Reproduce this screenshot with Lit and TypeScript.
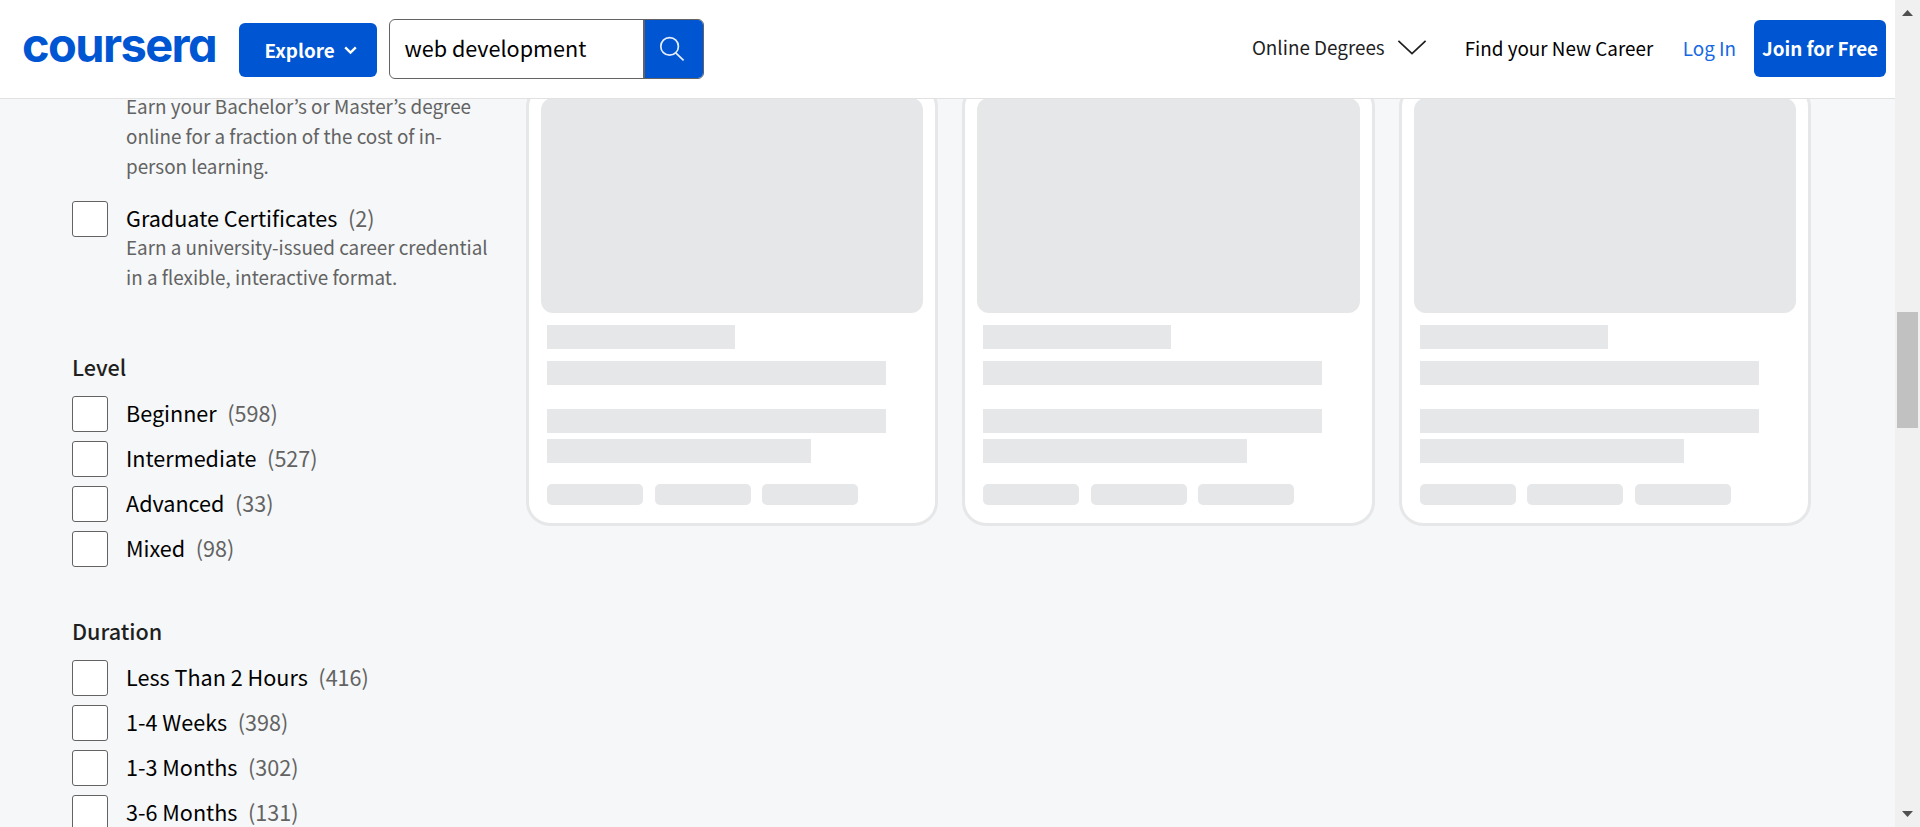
import { LitElement, html, css, svg } from 'lit';
import { customElement, property } from 'lit/decorators.js';

interface Option {
  label: string;
  count: number;
  note?: unknown;
}

const LEVELS: Option[] = [
  { label: 'Beginner', count: 598 },
  { label: 'Intermediate', count: 527 },
  { label: 'Advanced', count: 33 },
  { label: 'Mixed', count: 98 },
];

const DURATIONS: Option[] = [
  { label: 'Less Than 2 Hours', count: 416 },
  { label: '1-4 Weeks', count: 398 },
  { label: '1-3 Months', count: 302 },
  { label: '3-6 Months', count: 131 },
];

@customElement('site-header')
class SiteHeader extends LitElement {
  static styles = css`
    :host {
      display: flex;
      align-items: flex-start;
      box-sizing: border-box;
      height: 99px;
      padding: 0 9px 0 22px;
      background: #fff;
      border-bottom: 1px solid #e1e1e1;
      font-size: 18.85px;
      line-height: 30px;
      white-space: nowrap;
    }
    .logo {
      width: 217px;
      margin-top: 17px;
      font: 700 47px/56px Inter, sans-serif;
      font-feature-settings: 'cv11';
      letter-spacing: -1.6px;
      color: #0056d2;
    }
    .explore {
      display: flex;
      align-items: center;
      box-sizing: border-box;
      width: 138px;
      height: 54px;
      margin-top: 23px;
      padding-left: 25.5px;
      border-radius: 6px;
      background: #0056d2;
      color: #fff;
      font-weight: 700;
    }
    .explore svg {
      margin-left: 9px;
    }
    .search {
      display: flex;
      box-sizing: border-box;
      width: 315px;
      height: 60px;
      margin: 19px 0 0 12px;
      border: 1px solid #636363;
      border-radius: 6px;
      overflow: hidden;
      font-size: 21.6px;
      color: #000;
    }
    .query {
      flex: 1;
      padding: 13px 0 0 14.5px;
    }
    .go {
      width: 58px;
      border-left: 2px solid #636363;
      background: #0056d2;
    }
    .go svg {
      display: block;
      margin: 16px 0 0 14px;
    }
    .nav {
      display: flex;
      margin-left: auto;
    }
    .degrees {
      padding-top: 32px;
      color: #1f1f1f;
    }
    .degrees svg {
      margin-left: 12px;
    }
    .career {
      margin-left: 38px;
      padding-top: 33px;
      color: #000;
    }
    .login {
      margin-left: 29.5px;
      padding-top: 33px;
      color: #1668e3;
    }
    .join {
      box-sizing: border-box;
      width: 132px;
      height: 57px;
      margin: 20px 0 0 18px;
      padding-top: 13px;
      border-radius: 6px;
      background: #0056d2;
      color: #fff;
      font-weight: 700;
      text-align: center;
    }
  `;

  render() {
    return html`
      <div class="logo">coursera</div>
      <div class="explore">
        <span>Explore</span>
        <svg width="13" height="9" viewBox="0 0 13 9" fill="none" stroke="#fff" stroke-width="2.4">
          <path d="M1.2 1.4 6.5 6.6 11.8 1.4" />
        </svg>
      </div>
      <div class="search">
        <div class="query">web development</div>
        <div class="go">
          <svg width="26" height="27" viewBox="0 0 26 27" fill="none" stroke="#e6eefa" stroke-width="1.7">
            <circle cx="10.6" cy="10.4" r="8.8" />
            <path d="M16.7 16.8 24.6 24.4" />
          </svg>
        </div>
      </div>
      <div class="nav">
        <div class="degrees">
          Online Degrees<svg width="30" height="15" viewBox="0 0 30 15" fill="none" stroke="#1f1f1f" stroke-width="1.7">
            <path d="M1.4.8 15 13.6 28.6.8" />
          </svg>
        </div>
        <div class="career">Find your New Career</div>
        <div class="login">Log In</div>
        <div class="join">Join for Free</div>
      </div>
    `;
  }
}

@customElement('filter-option')
class FilterOption extends LitElement {
  @property({ attribute: false }) option!: Option;

  static styles = css`
    :host {
      display: grid;
      grid-template-columns: 36px 1fr;
      column-gap: 18px;
      font-size: 21.6px;
      line-height: 30px;
    }
    .box {
      box-sizing: border-box;
      height: 36px;
      background: #fff;
      border: 1px solid #636363;
      border-radius: 3px;
    }
    .text {
      padding-top: 2px;
      color: #000;
    }
    .count {
      margin-left: 10.5px;
      color: #636363;
    }
    .note {
      margin-top: -1px;
      font-size: 18.85px;
      color: #636363;
    }
  `;

  render() {
    const { label, count, note } = this.option;
    return html`
      <div class="box"></div>
      <div class="text">
        <span>${label}</span><span class="count">(${count})</span>
        ${note ? html`<div class="note">${note}</div>` : ''}
      </div>
    `;
  }
}

@customElement('skeleton-card')
class SkeletonCard extends LitElement {
  static styles = css`
    :host {
      display: block;
      box-sizing: border-box;
      height: 443px;
      padding: 12px;
      background: #fff;
      border: 3px solid #e5e7e8;
      border-radius: 24px;
    }
    .image,
    .bar,
    .pill {
      background: #e5e7e8;
    }
    .image {
      height: 215px;
      border-radius: 12px;
    }
    .lines {
      padding: 12px 6px 0;
    }
    .bar {
      height: 24px;
    }
    .partner {
      width: 188px;
    }
    .title {
      width: 339px;
      margin-top: 12px;
    }
    .skills {
      width: 339px;
      margin-top: 24px;
    }
    .rest {
      width: 264px;
      margin-top: 6px;
    }
    .pills {
      display: flex;
      gap: 11.5px;
      margin-top: 20.5px;
    }
    .pill {
      width: 96px;
      height: 21.5px;
      border-radius: 5px;
    }
  `;

  render() {
    return html`
      <div class="image"></div>
      <div class="lines">
        <div class="bar partner"></div>
        <div class="bar title"></div>
        <div class="bar skills"></div>
        <div class="bar rest"></div>
        <div class="pills">
          <div class="pill"></div>
          <div class="pill"></div>
          <div class="pill"></div>
        </div>
      </div>
    `;
  }
}

@customElement('app-root')
class AppRoot extends LitElement {
  static styles = css`
    :host {
      display: grid;
      grid-template-columns: 1fr 25px;
      height: 827px;
      overflow: hidden;
      background: #f5f7f8;
      font-family: 'Noto Sans CJK KR', 'Noto Sans', sans-serif;
    }
    .page {
      display: flex;
      flex-direction: column;
      height: 827px;
      overflow: hidden;
    }
    .content {
      flex: 1;
      min-height: 0;
      display: flex;
      overflow: hidden;
    }
    .filters {
      width: 526px;
      padding-left: 72px;
      margin-top: -8px;
      flex: none;
      box-sizing: border-box;
    }
    .note {
      width: 370px;
      margin: 0 0 20px 54px;
      font-size: 18.85px;
      line-height: 30px;
      color: #636363;
    }
    h3 {
      margin: 49px 0 14px;
      font-size: 21.6px;
      line-height: 30px;
      font-weight: 500;
      color: #1f1f1f;
    }
    h3.level {
      margin-top: 60px;
    }
    .list {
      display: grid;
      gap: 9px;
    }
    .list filter-option {
      height: 36px;
    }
    .results {
      display: grid;
      grid-template-columns: repeat(3, 1fr);
      gap: 24px;
      width: 1285px;
      margin-top: -16px;
      align-self: flex-start;
    }
    .scrollbar {
      display: flex;
      flex-direction: column;
      align-items: center;
      box-sizing: border-box;
      height: 827px;
      padding: 10px 0;
      background: #f0f0f0;
    }
    .thumb {
      width: 21px;
      height: 116px;
      margin: 296px 0 auto;
      background: #c1c1c1;
    }
    svg {
      display: block;
    }
  `;

  private arrow(points: string) {
    return html`<svg width="11" height="6" viewBox="0 0 11 6">${svg`<path d=${points} fill="#505050" />`}</svg>`;
  }

  private list(options: Option[]) {
    return html`<div class="list">
      ${options.map((option) => html`<filter-option .option=${option}></filter-option>`)}
    </div>`;
  }

  render() {
    return html`
      <div class="page">
        <site-header></site-header>
        <div class="content">
          <div class="filters">
            <div class="note">
              Earn your Bachelor’s or Master’s degree<br />online for a fraction of the cost of in-<br />person learning.
            </div>
            <filter-option
              .option=${{
                label: 'Graduate Certificates',
                count: 2,
                note: html`Earn a university-issued career credential<br />in a flexible, interactive format.`,
              }}
            ></filter-option>
            <h3 class="level">Level</h3>
            ${this.list(LEVELS)}
            <h3>Duration</h3>
            ${this.list(DURATIONS)}
          </div>
          <div class="results">
            <skeleton-card></skeleton-card>
            <skeleton-card></skeleton-card>
            <skeleton-card></skeleton-card>
          </div>
        </div>
      </div>
      <div class="scrollbar">
        ${this.arrow('M0 6 5.5 0 11 6Z')}
        <div class="thumb"></div>
        ${this.arrow('M0 0H11L5.5 6Z')}
      </div>
    `;
  }
}
